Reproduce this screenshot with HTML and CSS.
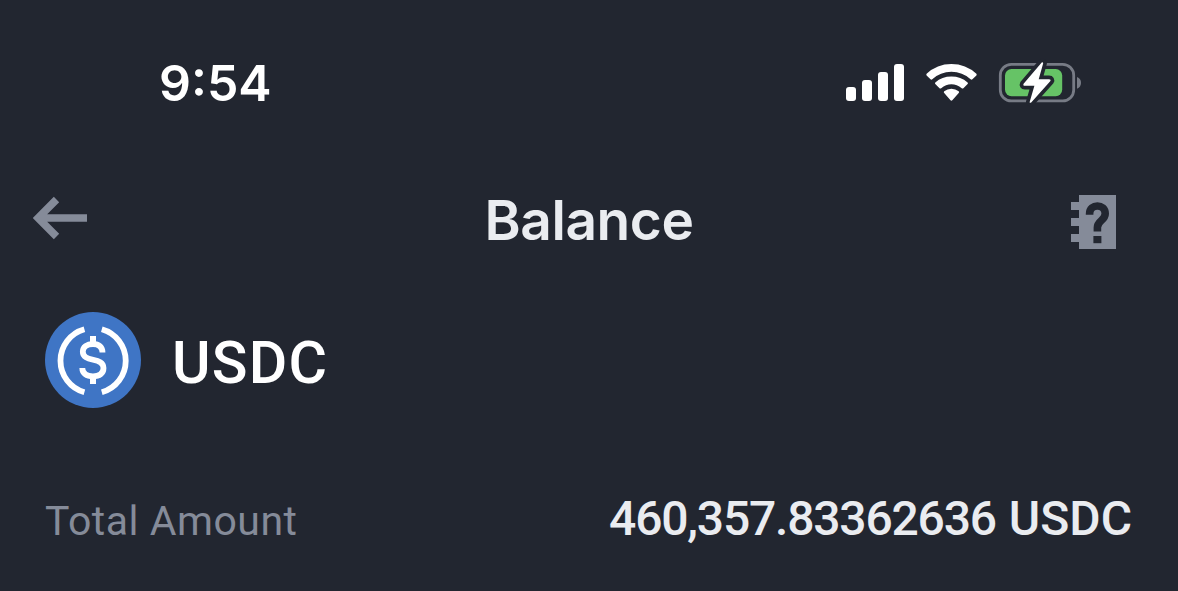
FILE: index.html
```html
<!DOCTYPE html>
<html lang="en">
<head>
<meta charset="utf-8">
<title>Balance</title>
<link rel="stylesheet" href="styles.css">
</head>
<body>
<main class="screen">
  <div class="status">
    <span class="time">9:54</span>
    <svg class="indicators" viewBox="840 56 248 52" aria-hidden="true">
      <g fill="#fff">
        <rect x="846" y="87" width="10" height="14" rx="3"/>
        <rect x="862" y="80" width="10" height="21" rx="3"/>
        <rect x="878" y="72" width="10" height="29" rx="3"/>
        <rect x="894" y="64" width="10" height="37" rx="3"/>
        <path d="M926.6 73.8Q937 64 951.4 64T976.4 73.8Q977 74.6 976.4 75.4L972.4 79.3Q971.5 80 970.6 79.3Q962.5 71.8 951.4 71.8T932.3 79.3Q931.4 80 930.5 79.3L926.6 75.4Q926 74.6 926.6 73.8Z"/>
        <path d="M935.3 82.4Q942 76.5 951.4 76.5T967.6 82.4Q968.4 83.3 967.6 84.1L963.4 88.2Q962.6 88.9 961.7 88.2Q957 84.2 951.4 84.2T941.2 88.2Q940.3 88.9 939.5 88.2L935.3 84.1Q934.6 83.3 935.3 82.4Z"/>
        <path d="M944.2 91.3Q947.3 88.8 951.4 88.8T958.7 91.3Q959.6 92.2 958.7 93.1L952.3 100.2Q951.4 101.1 950.5 100.2L944.2 93.1Q943.3 92.2 944.2 91.3Z"/>
      </g>
      <rect x="1000.3" y="64.3" width="73.4" height="36.6" rx="11" fill="none" stroke="#777b85" stroke-width="2.8"/>
      <path d="M1077 77Q1081 78.5 1081 82.8T1077 88.8Z" fill="#777b85"/>
      <rect x="1005" y="69" width="57.2" height="27.2" rx="6.5" fill="#66c366"/>
      <path d="M1041.7 62.6L1023.6 83.8Q1022.6 85.8 1024.9 85.8H1034.4L1029.6 102.2Q1030 103.4 1031.2 102.4L1050.2 81.3Q1051.4 79.3 1049 79.3H1038.7L1043.2 63.2Q1042.8 61.8 1041.7 62.6Z" fill="#fff" stroke="#222630" stroke-width="7.4" paint-order="stroke" stroke-linejoin="round"/>
    </svg>
  </div>
  <header class="nav">
    <svg class="back" viewBox="0 0 54 44" aria-label="Back"><path d="M23.5 3.5L5 22L23.5 40.5M5 22H54" fill="none" stroke="#858b99" stroke-width="7.6"/></svg>
    <h1 class="title">Balance</h1>
    <svg class="help" viewBox="0 0 46 54" aria-label="Help">
      <path d="M8 0H45V54H8V47H0V39H8V31H0V23H8V15H0V7H8Z" fill="#858b99"/>
      <path d="M18.6 19.8V18.8C18.6 8.4 34.2 8.4 34.2 18.8C34.2 25.5 26.4 25.5 26.4 32.5V36.5" fill="none" stroke="#222630" stroke-width="7.6"/>
      <rect x="22.4" y="41" width="8" height="7.2" fill="#222630"/>
    </svg>
  </header>
  <section class="asset">
    <svg class="coin" viewBox="0 0 96 96" aria-hidden="true">
      <circle cx="48" cy="48" r="48" fill="#3f75c5"/>
      <g fill="none" stroke="#fff">
        <path d="M39.4 17.2A32.7 32.7 0 0 0 39.4 80.2M56.8 17.2A32.7 32.7 0 0 1 56.8 80.2" stroke-width="5.8"/>
        <path d="M57.5 40.5C57.5 35 54 32 48 32S37.8 35 37.8 39.7C37.8 51 58.5 44.5 58.5 56C58.5 61.5 54.5 64.3 48 64.3S37.3 61.5 37.3 56" stroke-width="5.8"/>
        <path d="M48 24V32M48 64V72" stroke-width="6"/>
      </g>
    </svg>
    <span class="name">USDC</span>
  </section>
  <section class="total">
    <span class="label">Total Amount</span>
    <span class="value"><span class="number">460,357.83362636</span><span class="unit">USDC</span></span>
  </section>
</main>
</body>
</html>
```
FILE: styles.css
```css
* { box-sizing: border-box; }
body { margin: 0; background: #222630; }
.screen {
  width: 1178px;
  height: 591px;
  padding-top: 52px;
  overflow: hidden;
  background: #222630;
  color: #eaecf0;
  font-family: Roboto, sans-serif;
}
.status {
  display: flex;
  justify-content: space-between;
  align-items: center;
  height: 60px;
  padding: 0 90px 0 159px;
}
.time {
  color: #fff;
  font: 600 50px/60px Inter, sans-serif;
  letter-spacing: 0;
  padding-top: 2px;
}
.indicators { width: 248px; height: 52px; }
.nav {
  display: grid;
  grid-template-columns: 80px 1fr 80px;
  align-items: center;
  height: 80px;
  margin-top: 68px;
  padding: 0 61px 0 33px;
}
.back { width: 54px; height: 44px; margin-top: -4px; }
.title {
  margin: 0;
  padding-left: 28px;
  text-align: center;
  font: 600 55px/80px Inter, sans-serif;
  letter-spacing: -0.4px;
}
.help { width: 46px; height: 54px; justify-self: end; margin-top: 4px; }
.asset {
  display: flex;
  align-items: center;
  gap: 31px;
  height: 96px;
  margin: 52px 0 0 45px;
}
.coin { width: 96px; height: 96px; }
.name {
  color: #fff;
  font-size: 59px;
  font-weight: 500;
  line-height: 96px;
  letter-spacing: 1.2px;
  padding-top: 5px;
}
.total {
  display: flex;
  justify-content: space-between;
  align-items: baseline;
  margin-top: 81px;
  padding: 0 46px 0 45px;
  line-height: 60px;
}
.label { color: #858b99; font-size: 41px; font-weight: 400; letter-spacing: 0.5px; }
.value { display: flex; gap: 13px; font-size: 48px; font-weight: 500; }
.number { letter-spacing: -1.2px; }
```
